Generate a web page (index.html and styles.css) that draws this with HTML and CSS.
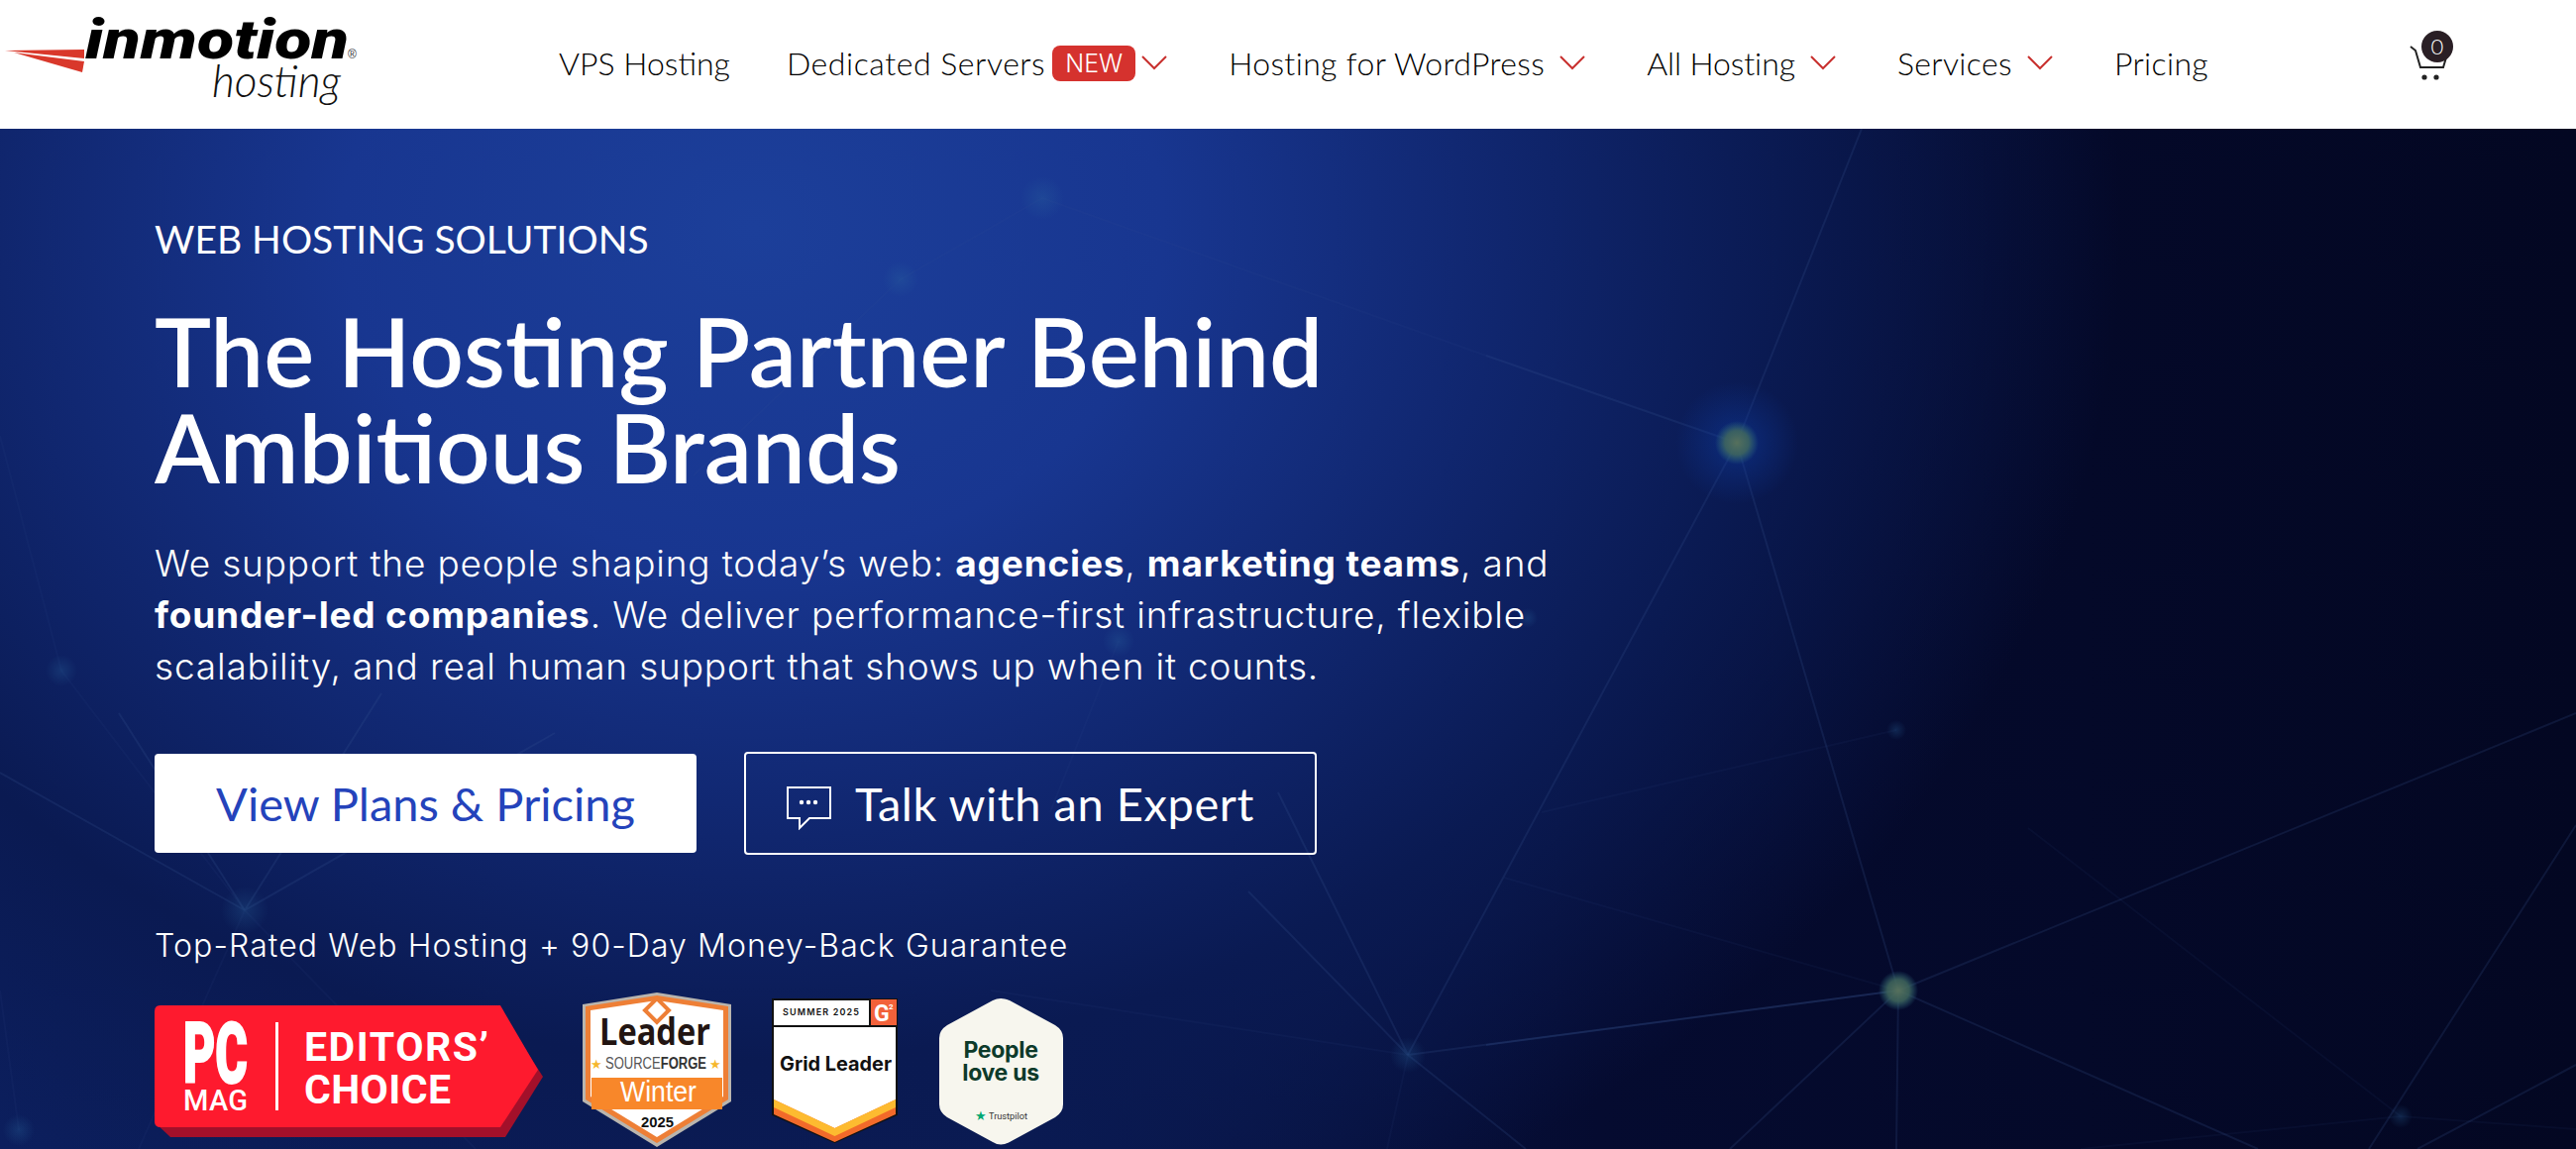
FILE: index.html
```html
<!DOCTYPE html>
<html lang="en">
    <head>
        <meta charset="UTF-8">
        <title>InMotion Hosting</title>
        <link rel="stylesheet" href="styles.css">
    </head>
    <body>
        <header class="topbar">
            <a class="logo" href="#">
                <svg width="370" height="130" viewBox="0 0 370 130">
                    <polygon points="5,51 85,50 85,59" fill="#d9382b"/>
                    <polygon points="14,53 85,62 83,73" fill="#d9382b"/>
                    <text class="logo-main" x="86" y="59" textLength="266" lengthAdjust="spacingAndGlyphs">inmotion</text>
                    <text class="logo-sub" x="214" y="98" textLength="130" lengthAdjust="spacingAndGlyphs">hosting</text>
                    <text class="logo-reg" x="351" y="59">®</text>
                </svg>
            </a>
            <nav class="nav">
                <a class="nav-link nav-first" href="#">VPS Hosting</a>
                <a class="nav-link nav-wide" href="#">Dedicated Servers <span class="new-tag">NEW</span>
                    <svg class="chev" width="26" height="18" viewBox="1 0 26 18"><path d="M2 3l12 12L26 3"/></svg></a>
                <a class="nav-link" href="#">Hosting for WordPress
                    <svg class="chev" width="26" height="18" viewBox="1 0 26 18"><path d="M2 3l12 12L26 3"/></svg></a>
                <a class="nav-link nav-tight" href="#">All Hosting
                    <svg class="chev" width="26" height="18" viewBox="1 0 26 18"><path d="M2 3l12 12L26 3"/></svg></a>
                <a class="nav-link" href="#">Services
                    <svg class="chev" width="26" height="18" viewBox="1 0 26 18"><path d="M2 3l12 12L26 3"/></svg></a>
                <a class="nav-link" href="#">Pricing</a>
            </nav>
            <a class="cart" href="#">
                <svg width="44" height="40" viewBox="0 0 44 40">
                    <path d="M1 1l5 4 5 17h23l3-10" fill="none" stroke="#222" stroke-width="2"/>
                    <circle cx="15" cy="32" r="2.600" fill="#222"/>
                    <circle cx="27" cy="32" r="2.600" fill="#222"/>
                </svg>
                <span class="cart-count">0</span>
            </a>
        </header>

        <section class="hero">
            <svg class="hero-bg" width="2600" height="1030" viewBox="0 130 2600 1030">
                <defs>
                    <radialGradient id="halo">
                        <stop offset="0" stop-color="#0f3ea8" stop-opacity=".5"/>
                        <stop offset="1" stop-color="#0f3ea8" stop-opacity="0"/>
                    </radialGradient>
                    <radialGradient id="core">
                        <stop offset="0" stop-color="#56705c"/>
                        <stop offset=".55" stop-color="#41695e" stop-opacity=".85"/>
                        <stop offset="1" stop-color="#2a6a80" stop-opacity="0"/>
                    </radialGradient>
                    <radialGradient id="dot">
                        <stop offset="0" stop-color="#2b6aa0" stop-opacity=".28"/>
                        <stop offset="1" stop-color="#2b6aa0" stop-opacity="0"/>
                    </radialGradient>
                </defs>
                <g class="lines">
                    <path d="M1879 130L1753 447M1500 359L1753 447M1753 447L1421 1065M1753 447L1916 1000"/>
                    <path d="M1916 1000L2600 720M1916 1000L1500 1055M1916 1000L1746 1160M1916 1000L1914 1160M1916 1000L2279 1160"/>
                    <path d="M2391 1160L2600 833M2440 1160L2600 1075"/>
                    <path d="M247 919L120 720M247 919L385 700M247 919L0 780M247 919L560 740"/>
                    <path d="M1421 1065L1290 800M1421 1065L1916 1000M1421 1065L1260 900M1421 1065L1540 1160"/>
                </g>
                <g class="lines lines-faint">
                    <path d="M1914 737L1556 820M1518 886L1916 1000M2047 836L2423 1127M2423 1127L2100 1160M2423 1127L2600 1140"/>
                    <path d="M1052 200L1500 359M1052 200L909 282M909 282L700 480M1129 647L1060 820M0 440L62 677M62 677L247 919"/>
                    <path d="M247 919L140 1160M247 919L480 1160M0 1000L19 1141M1421 1065L1400 1160M1000 1000L1421 1065"/>
                </g>
                <circle cx="1753" cy="447" r="62" fill="url(#halo)"/>
                <circle cx="1753" cy="447" r="22" fill="url(#core)"/>
                <circle cx="1916" cy="1000" r="20" fill="url(#core)"/>
                <circle cx="1052" cy="200" r="22" fill="url(#dot)"/>
                <circle cx="909" cy="282" r="18" fill="url(#dot)"/>
                <circle cx="1129" cy="647" r="16" fill="url(#dot)"/>
                <circle cx="62" cy="677" r="16" fill="url(#dot)"/>
                <circle cx="247" cy="919" r="24" fill="url(#dot)"/>
                <circle cx="1421" cy="1065" r="18" fill="url(#dot)"/>
                <circle cx="19" cy="1141" r="16" fill="url(#dot)"/>
                <circle cx="1914" cy="737" r="10" fill="url(#dot)"/>
                <circle cx="1542" cy="624" r="10" fill="url(#dot)"/>
                <circle cx="2423" cy="1127" r="12" fill="url(#dot)"/>
            </svg>

            <div class="hero-content">
                <p class="eyebrow">WEB HOSTING SOLUTIONS</p>
                <h1 class="headline">The Hosting Partner Behind<br>Ambitious Brands</h1>
                <p class="lead">We support the people shaping today’s web: <b>agencies</b>, <b>marketing teams</b>, and<br><b>founder-led companies</b>. We deliver performance-first infrastructure, flexible<br>scalability, and real human support that shows up when it counts.</p>
                <div class="actions">
                    <a class="btn btn-solid" href="#">View Plans &amp; Pricing</a>
                    <a class="btn btn-line" href="#">
                        <svg class="chat-icon" width="46" height="44" viewBox="0 0 46 44" fill="none" stroke="#fff" stroke-width="2">
                            <path d="M1 1h43v31H23l-10 10V32H1z"/>
                            <circle cx="15" cy="16" r="1.200" fill="#fff"/>
                            <circle cx="22" cy="16" r="1.200" fill="#fff"/>
                            <circle cx="29" cy="16" r="1.200" fill="#fff"/>
                        </svg>
                        Talk with an Expert
                    </a>
                </div>
                <p class="rated">Top-Rated Web Hosting + 90-Day Money-Back Guarantee</p>
                <div class="badges">
                    <svg class="badge-pc" width="392" height="133" viewBox="0 0 392 133">
                        <path d="M8 10H352L392 72 354 133H16L0 118z" fill="#a3102a"/>
                        <path d="M6 0H349L387 65 349 123H6Q0 123 0 117V6Q0 0 6 0z" fill="#fe1a2e"/>
                        <text class="pc-big" x="29" y="78" textLength="65" lengthAdjust="spacingAndGlyphs">PC</text>
                        <text class="pc-mag" x="29" y="106" textLength="65">MAG</text>
                        <rect x="122" y="17" width="3" height="89" fill="#fff"/>
                        <text class="pc-word" x="151" y="56" textLength="186">EDITORS’</text>
                        <text class="pc-word" x="151" y="99" textLength="148">CHOICE</text>
                    </svg>
                    <svg class="badge-sf" width="150" height="156" viewBox="0 0 150 156">
                        <polygon points="75,0 150,12 150,110 75,156 0,110 0,12" fill="#b9b5ae"/>
                        <polygon points="75,3 147,14 147,108 75,152 3,108 3,14" fill="#ee7f36"/>
                        <polygon points="75,8 142,18 142,105 75,146 8,105 8,18" fill="#fff"/>
                        <polygon points="75,6 87,18 75,30 63,18" fill="none" stroke="#ee7f36" stroke-width="4"/>
                        <text class="sf-leader" x="17" y="53" textLength="112" lengthAdjust="spacingAndGlyphs">Leader</text>
                        <text class="sf-name" x="23" y="77" textLength="102" lengthAdjust="spacingAndGlyphs"><tspan class="sf-light">SOURCE</tspan><tspan class="sf-bold">FORGE</tspan></text>
                        <text class="sf-star" x="8" y="77">★</text>
                        <text class="sf-star" x="128" y="77">★</text>
                        <polygon points="9,86 141,86 141,118 9,118" fill="#f8872a"/>
                        <text class="sf-season" x="38" y="110" textLength="77" lengthAdjust="spacingAndGlyphs">Winter</text>
                        <text class="sf-year" x="59" y="136" textLength="33" lengthAdjust="spacingAndGlyphs">2025</text>
                    </svg>
                    <svg class="badge-g2" width="127" height="146" viewBox="0 0 127 146">
                        <polygon points="1,1 126,1 126,117 63.500,145 1,117" fill="#fff" stroke="#111" stroke-width="2"/>
                        <rect x="99" y="1" width="27" height="27" fill="#f2613a"/>
                        <path d="M0 28H127M99 0V28" stroke="#111" stroke-width="2"/>
                        <text class="g2-season" x="11" y="17" textLength="77">SUMMER 2025</text>
                        <text class="g2-mark" x="103" y="23">G</text>
                        <text class="g2-sup" x="118" y="11">2</text>
                        <text class="g2-title" x="8" y="73" textLength="113" lengthAdjust="spacingAndGlyphs">Grid Leader</text>
                        <polygon points="2,102 63.500,131 125,102 125,117 63.500,145 2,117" fill="#f26a2a"/>
                        <polygon points="2,102 63.500,131 125,102 125,110 63.500,139 2,110" fill="#fdbb30"/>
                    </svg>
                    <svg class="badge-tp" width="125" height="149" viewBox="0 0 125 149">
                        <path d="M54 3Q62 -1 71 3L117 28Q125 33 125 41V108Q125 116 117 121L71 146Q62 151 54 146L8 121Q0 116 0 108V41Q0 33 8 28z" fill="#f7f6ee"/>
                        <text class="tp-big" x="62" y="61">People</text>
                        <text class="tp-big" x="62" y="84">love us</text>
                        <text class="tp-star" x="36" y="124">★</text>
                        <text class="tp-name" x="50" y="123" textLength="39" lengthAdjust="spacingAndGlyphs">Trustpilot</text>
                    </svg>
                </div>
            </div>
        </section>
    </body>
</html>
```

FILE: styles.css
```css
* {
    box-sizing: border-box;
}
html, body {
    margin: 0;
    height: 1160px;
    overflow: hidden;
}
body {
    font-family: "Lato", "Liberation Sans", sans-serif;
    background: #040824;
}
a {
    text-decoration: none;
    color: inherit;
}
p, h1 {
    margin: 0;
}

/* top bar */
.topbar {
    height: 130px;
    background: #fff;
    display: flex;
    align-items: center;
}
.logo {
    width: 370px;
    height: 130px;
    flex: none;
}
.logo-main {
    font-family: "Roboto", sans-serif;
    font-weight: 900;
    font-style: italic;
    font-size: 56px;
    fill: #000;
}
.logo-sub {
    font-family: "Lato", sans-serif;
    font-weight: 300;
    font-style: italic;
    font-size: 46px;
    fill: #111;
}
.logo-reg {
    font-family: "Liberation Sans", sans-serif;
    font-size: 12px;
    fill: #333;
}
.nav {
    display: flex;
    align-items: center;
    gap: 62px;
    margin-left: 194px;
    margin-top: -3px;
    font-size: 32px;
    font-weight: 300;
    letter-spacing: .35px;
    color: #000;
}
.nav-link {
    display: flex;
    align-items: center;
    gap: 7px;
    white-space: nowrap;
}
.nav-first {
    margin-right: -5px;
    letter-spacing: 0;
}
.nav-wide {
    letter-spacing: .55px;
}
.nav-tight {
    letter-spacing: -.1px;
}
.new-tag {
    font-family: "Inter", sans-serif;
    font-size: 25px;
    font-weight: 300;
    letter-spacing: 0;
    line-height: 36px;
    height: 36px;
    width: 84px;
    text-align: center;
    color: #fff;
    background: #d5322e;
    border-radius: 8px;
}
.chev {
    margin-left: 8px;
    margin-top: -2px;
}
.new-tag + .chev {
    margin-left: -1px;
}
.chev path {
    fill: none;
    stroke: #c8302e;
    stroke-width: 2;
}
.cart {
    position: relative;
    margin-left: auto;
    margin-right: 124px;
    width: 44px;
    height: 40px;
    margin-top: 2px;
}
.cart-count {
    position: absolute;
    left: 12px;
    top: -15px;
    width: 32px;
    height: 32px;
    border-radius: 50%;
    background: #2a1f25;
    color: #fff;
    font-size: 22px;
    font-weight: 300;
    line-height: 32px;
    text-align: center;
}

/* hero */
.hero {
    position: relative;
    height: 1030px;
    overflow: hidden;
    background:
        radial-gradient(ellipse 1380px 1120px at 760px 100px, #1c3f9a 0%, #183690 30%, #10266e 55%, #0a1a52 75%, rgba(5, 11, 48, 0) 100%),
        linear-gradient(90deg, #0c1f5e 0%, #0a1a52 40%, #050b30 62%, #030722 100%);
}
.hero-bg {
    position: absolute;
    left: 0;
    top: 0;
}
.lines path {
    fill: none;
    stroke: #3a5a96;
    stroke-opacity: .2;
    stroke-width: 2;
}
.lines-faint path {
    stroke-opacity: .08;
}
.hero-content {
    position: relative;
    padding: 88px 0 0 156px;
    color: #fff;
}
.eyebrow {
    font-size: 39px;
    font-weight: 400;
    line-height: 46px;
}
.headline {
    margin-top: 41px;
    font-size: 96px;
    font-weight: 600;
    line-height: 97px;
}
.lead {
    margin-top: 44px;
    font-family: "Inter", sans-serif;
    font-size: 37px;
    font-weight: 300;
    letter-spacing: .82px;
    line-height: 52px;
}
.lead b {
    font-weight: 700;
}
.actions {
    display: flex;
    align-items: center;
    gap: 48px;
    margin-top: 60px;
}
.btn {
    display: flex;
    align-items: center;
    font-size: 47px;
    font-weight: 400;
    border-radius: 4px;
}
.btn-solid {
    width: 547px;
    height: 100px;
    justify-content: center;
    background: #fff;
    color: #2443bb;
}
.btn-line {
    width: 578px;
    height: 104px;
    padding-left: 41px;
    gap: 23px;
    border: 2.500px solid #fff;
    color: #fff;
    letter-spacing: .55px;
}
.chat-icon {
    margin-top: 10px;
}
.rated {
    margin-top: 72px;
    font-family: "Inter", sans-serif;
    font-size: 32px;
    font-weight: 300;
    letter-spacing: 1.1px;
    line-height: 40px;
}
.badges {
    display: flex;
    align-items: flex-start;
    margin-top: 27px;
}
.badge-pc {
    margin-top: 13px;
    margin-right: 40px;
    overflow: visible;
}
.badge-sf {
    margin-right: 41px;
}
.badge-g2 {
    margin-top: 6px;
    margin-right: 42px;
}
.badge-tp {
    margin-top: 5px;
}
.pc-big {
    font-family: "Roboto", sans-serif;
    font-weight: 900;
    font-size: 86px;
    fill: #fff;
    stroke: #fff;
    stroke-width: 2;
}
.pc-mag {
    font-family: "Roboto", sans-serif;
    font-weight: 500;
    font-size: 29px;
    fill: #fff;
}
.pc-word {
    font-family: "Liberation Sans Narrow", "Roboto", sans-serif;
    font-weight: 700;
    font-size: 41px;
    fill: #fff;
}
.sf-leader {
    font-family: "Open Sans", sans-serif;
    font-weight: 700;
    font-size: 37px;
    fill: #221512;
}
.sf-name {
    font-family: "Liberation Sans", sans-serif;
    font-size: 16px;
    fill: #333;
}
.sf-light {
    font-weight: 400;
    fill: #555;
}
.sf-bold {
    font-weight: 700;
}
.sf-star {
    font-family: "DejaVu Sans", sans-serif;
    font-size: 13px;
    fill: #f6b72c;
}
.sf-season {
    font-family: "Liberation Sans", sans-serif;
    font-size: 29px;
    fill: #fff;
}
.sf-year {
    font-family: "Liberation Sans", sans-serif;
    font-weight: 700;
    font-size: 15px;
    fill: #111;
}
.g2-season {
    font-family: "Inter", sans-serif;
    font-weight: 600;
    font-size: 9px;
    fill: #111;
}
.g2-mark {
    font-family: "Roboto", sans-serif;
    font-weight: 700;
    font-size: 23px;
    fill: #fff;
}
.g2-sup {
    font-family: "Roboto", sans-serif;
    font-weight: 700;
    font-size: 8px;
    fill: #fff;
}
.g2-title {
    font-family: "Inter", sans-serif;
    font-weight: 700;
    font-size: 20px;
    fill: #111;
}
.tp-big {
    font-family: "Inter", sans-serif;
    font-weight: 700;
    font-size: 23px;
    letter-spacing: -.3px;
    fill: #0d3a2a;
    text-anchor: middle;
}
.tp-star {
    font-family: "DejaVu Sans", sans-serif;
    font-size: 13px;
    fill: #00a872;
}
.tp-name {
    font-family: "Roboto", sans-serif;
    font-size: 9px;
    fill: #333;
}
```
